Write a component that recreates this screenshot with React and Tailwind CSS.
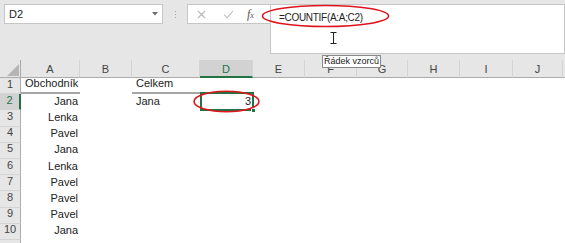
import React from "react";

const font = { fontFamily: '"Liberation Sans", Arial, sans-serif' };

const columns = ["A", "B", "C", "D", "E", "F", "G", "H", "I", "J", ""];
const names = ["Jana", "Lenka", "Pavel", "Jana", "Lenka", "Pavel", "Pavel", "Pavel", "Jana"];

function HeaderCell({ label, active }) {
  return (
    <div
      className={`h-[18px] flex items-center justify-center pt-[2px] border-r border-[#d4d4d4] ${
        active
          ? "bg-[#d2d2d2] text-[#217346] border-b-2 border-b-[#217346]"
          : "bg-[#e6e6e6] text-[#444] border-b border-b-[#ababab]"
      }`}
    >
      {label}
    </div>
  );
}

function RowHead({ n, active }) {
  return (
    <div
      className={`h-[16.2px] flex items-end justify-center pb-px border-b border-[#d4d4d4] ${
        active
          ? "bg-[#d2d2d2] text-[#217346] border-r-2 border-r-[#217346]"
          : "bg-[#e6e6e6] text-[#444] border-r border-r-[#ababab]"
      }`}
    >
      {n}
    </div>
  );
}

function Cell({ children, align = "left", heading, selected }) {
  return (
    <div
      className={`relative h-[16.2px] flex items-end pb-px whitespace-nowrap text-[#222] ${
        align === "right" ? "justify-end pr-[2px]" : "justify-start pl-[4px]"
      } ${heading ? "border-b-2 border-[#a6a6a6]" : ""}`}
    >
      {children}
      {selected && (
        <>
          <div className="absolute -top-[2px] -bottom-px left-0 -right-px border-2 border-[#217346]" />
          <div className="absolute -right-[3px] -bottom-[3px] w-[5px] h-[5px] bg-[#217346] border border-white" />
        </>
      )}
    </div>
  );
}

export default function App() {
  const rows = [];
  for (let r = 1; r <= 11; r++) {
    const cells = columns.map((c) => {
      if (r === 1 && c === "A") return <Cell key={c} heading>Obchodník</Cell>;
      if (r === 1 && c === "C") return <Cell key={c} heading>Celkem</Cell>;
      if (r >= 2 && r <= 10 && c === "A")
        return <Cell key={c} align="right">{names[r - 2]}</Cell>;
      if (r === 2 && c === "C") return <Cell key={c}>Jana</Cell>;
      if (r === 2 && c === "D")
        return <Cell key={c} align="right" selected>3</Cell>;
      return <Cell key={c} />;
    });
    rows.push(
      <React.Fragment key={r}>
        {/* row 11 is only a sliver at the bottom edge, its number isn't visible */}
        <RowHead n={r <= 10 ? r : ""} active={r === 2} />
        {cells}
      </React.Fragment>
    );
  }

  return (
    <div className="relative w-[565px] h-[243px] overflow-hidden bg-white text-[11px]" style={font}>
      {/* formula bar area */}
      <div className="h-[60px] bg-[#e6e6e6] flex items-start pt-1 pl-1">
        <div className="w-[159px] h-5 bg-white border border-[#c6c6c6] flex items-center justify-between pl-1 pr-[4px] text-[#222]">
          <span>D2</span>
          <svg width="6" height="4" viewBox="0 0 6 4">
            <polygon points="0,0 6,0 3,3.5" fill="#6d6d6d" />
          </svg>
        </div>
        <div className="w-6 h-5 flex flex-col items-center justify-center gap-[2px]">
          <span className="w-px h-px bg-[#a8a8a8]" />
          <span className="w-px h-px bg-[#a8a8a8]" />
          <span className="w-px h-px bg-[#a8a8a8]" />
        </div>
        <div className="w-[83px] h-5 bg-white border border-[#c6c6c6] border-r-0 flex items-center pl-[9px]">
          <svg width="9" height="9" viewBox="0 0 9 9" className="mr-[17px]">
            <path d="M1 1 L8 8 M8 1 L1 8" stroke="#b9b9b9" strokeWidth="1.1" />
          </svg>
          <svg width="11" height="9" viewBox="0 0 11 9" className="mr-[13px]">
            <path d="M1 4.5 L4 7.8 L10 1" stroke="#b9b9b9" strokeWidth="1.1" fill="none" />
          </svg>
          <span
            className="italic text-[#555] text-[12px] leading-none"
            style={{ fontFamily: '"Liberation Serif", "Times New Roman", serif' }}
          >
            f<span className="text-[8px]">x</span>
          </span>
        </div>
        <div className="flex-1 h-[50px] bg-white border border-[#c6c6c6] pl-[8px] pt-[4px]">
          <span className="text-[10px] tracking-[-0.03em] text-[#222]">=COUNTIF(A:A;C2)</span>
        </div>
      </div>

      {/* sheet grid */}
      <div className="grid grid-cols-[21px_59px_52px_68px_53px_52px_52px_51px_52px_53px_50px_1fr]">
        <div className="h-[18px] bg-[#e6e6e6] border-r border-b border-[#ababab] flex items-end justify-end pr-[1px] pb-[1px]">
          <svg width="12" height="12" viewBox="0 0 12 12">
            <polygon points="12,0 12,12 0,12" fill="#b5b5b5" />
          </svg>
        </div>
        {columns.map((c) => (
          <HeaderCell key={c || "k"} label={c} active={c === "D"} />
        ))}
        {rows}
      </div>

      {/* annotations */}
      <svg className="absolute left-[261px] top-[4px]" width="129" height="24" viewBox="0 0 129 24">
        <ellipse cx="64.5" cy="12" rx="63" ry="10.5" fill="none" stroke="#e0141c" strokeWidth="1.6" />
      </svg>
      <svg className="absolute left-[193px] top-[90px]" width="67" height="23" viewBox="0 0 67 23">
        <ellipse cx="33.5" cy="11.5" rx="32.5" ry="10.2" fill="none" stroke="#e0141c" strokeWidth="1.6" />
      </svg>
      <svg className="absolute left-[330px] top-[32px]" width="7" height="12" viewBox="0 0 7 12">
        <path d="M0.5 0.5 H6.5 M3.5 0.5 V11.5 M0.5 11.5 H6.5" stroke="#222" strokeWidth="1" fill="none" />
      </svg>
      <div className="absolute left-[322px] top-[55px] h-[13px] px-[1px] bg-white border border-[#8a8a8a] text-[9px] leading-[11px] text-[#222] whitespace-nowrap">
        Řádek vzorců
      </div>
    </div>
  );
}
